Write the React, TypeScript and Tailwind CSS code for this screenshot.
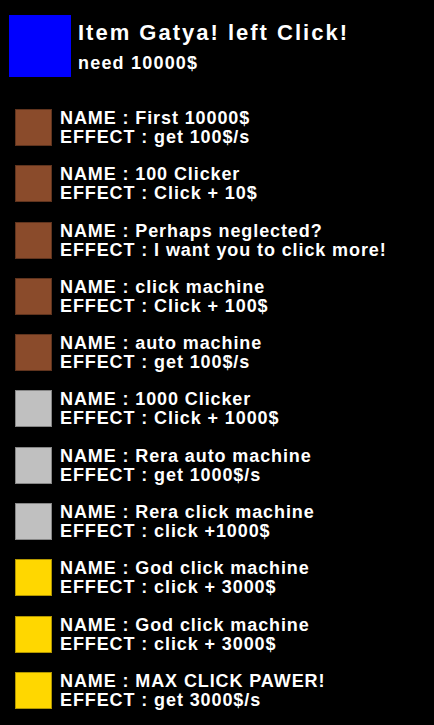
const items = [
  { name: "First 10000$", effect: "get 100$/s", color: "bg-[#8a4b2b]" },
  { name: "100 Clicker", effect: "Click + 10$", color: "bg-[#8a4b2b]" },
  { name: "Perhaps neglected?", effect: "I want you to click more!", color: "bg-[#8a4b2b]" },
  { name: "click machine", effect: "Click + 100$", color: "bg-[#8a4b2b]" },
  { name: "auto machine", effect: "get 100$/s", color: "bg-[#8a4b2b]" },
  { name: "1000 Clicker", effect: "Click + 1000$", color: "bg-[#c0c0c0]" },
  { name: "Rera auto machine", effect: "get 1000$/s", color: "bg-[#c0c0c0]" },
  { name: "Rera click machine", effect: "click +1000$", color: "bg-[#c0c0c0]" },
  { name: "God click machine", effect: "click + 3000$", color: "bg-[#ffd700]" },
  { name: "God click machine", effect: "click + 3000$", color: "bg-[#ffd700]" },
  { name: "MAX CLICK PAWER!", effect: "get 3000$/s", color: "bg-[#ffd700]" },
];

export default function App() {
  return (
    <div className="w-[434px] h-[725px] bg-black text-white font-['Liberation_Sans',Arial,sans-serif] font-bold overflow-hidden">
      <div className="flex pl-[9px] pt-[15px]">
        <div className="w-[62px] h-[62px] bg-[#0000ff]" />
        <div className="ml-[7px] flex flex-col">
          <div className="text-[22px] leading-[26px] tracking-[2px] mt-[5px]">Item Gatya! left Click!</div>
          <div className="text-[18px] leading-[20px] tracking-[1.2px] mt-[7px]">need 10000$</div>
        </div>
      </div>
      <div className="flex flex-col gap-[18.3px] mt-[32px] pl-[15px]">
        {items.map((it, i) => (
          <div key={i} className="flex">
            <div className={`w-[37px] h-[37px] border border-black/30 ${it.color}`} />
            <div className="ml-[8px] flex flex-col text-[18px] leading-[19px] tracking-[0.9px]">
              <span>NAME : {it.name}</span>
              <span>EFFECT : {it.effect}</span>
            </div>
          </div>
        ))}
      </div>
    </div>
  );
}
